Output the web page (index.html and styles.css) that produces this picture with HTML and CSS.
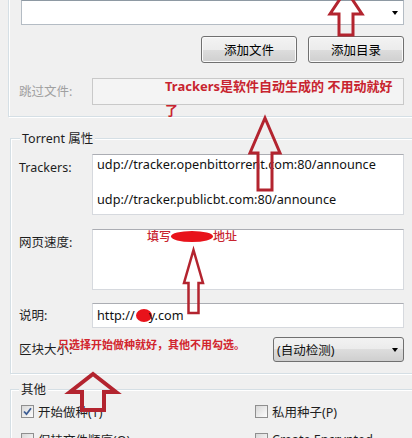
FILE: index.html
```html
<!DOCTYPE html>
<html lang="zh-CN">
<head>
<meta charset="utf-8">
<title>创建 Torrent</title>
<link rel="stylesheet" href="styles.css">
</head>
<body>
<div class="dlg">
  <div class="grp g1">
    <div class="top-combo"><span class="tri"></span></div>
    <div class="btnrow">
      <button class="btn">添加文件</button>
      <button class="btn">添加目录</button>
    </div>
    <div class="row">
      <span class="lbl dis">跳过文件:</span>
      <div class="field skip"></div>
    </div>
  </div>

  <div class="grp g2">
    <span class="legend">Torrent 属性</span>
    <div class="row top">
      <span class="lbl">Trackers:</span>
      <div class="field area"><div>udp://tracker.openbittorrent.com:80/announce</div><div>&nbsp;</div><div>udp://tracker.publicbt.com:80/announce</div></div>
    </div>
    <div class="row top r2">
      <span class="lbl">网页速度:</span>
      <div class="field area"></div>
    </div>
    <div class="row r3">
      <span class="lbl">说明:</span>
      <div class="field line">http://<span class="blob b2"></span>y.com</div>
    </div>
    <div class="row r4">
      <span class="lbl">区块大小:</span>
      <div class="sel"><span>(自动检测)</span><span class="tri"></span></div>
    </div>
  </div>

  <div class="grp g3">
    <span class="legend l3">其他</span>
    <div class="checks">
      <label class="chk"><span class="box"><svg width="11" height="11" viewBox="0 0 11 11"><path d="M2 5.5 L4.5 8.2 L9 2.2" fill="none" stroke="#3d5d94" stroke-width="1.8"/></svg></span>开始做种(T)</label>
      <label class="chk"><span class="box"></span>私用种子(P)</label>
      <label class="chk"><span class="box"></span>保持文件顺序(O)</label>
      <label class="chk"><span class="box"></span>Create Encrypted</label>
    </div>
  </div>

  <svg class="arrows" width="412" height="438" viewBox="0 0 412 438">
    <polygon points="346,-10 362,14 353,14 353,35 339,35 339,14 330,14"/>
    <polygon points="265,118 280,153 272,153 272,190 258,190 258,153 250,153"/>
    <polygon class="thin" points="193.5,250 203,283 198.5,283 198.5,313 188.5,313 188.5,283 184,283"/>
    <polygon class="thick" points="93,374 116,392 104,392 104,410 82,410 82,392 70,392"/>
  </svg>

  <div class="note n1">Trackers是软件自动生成的 不用动就好<br>了</div>
  <div class="note n2">填写<span class="blob b1"></span>地址</div>
  <div class="note n3">只选择开始做种就好，其他不用勾选。</div>
</div>
</body>
</html>
```

FILE: styles.css
```css
body {
  margin: 0;
  background: #f0f0f0;
  font-family: "Noto Sans", "Noto Sans CJK SC", sans-serif;
  font-size: 12.5px;
  color: #1e1e1e;
}

.dlg {
  position: relative;
  width: 412px;
  height: 438px;
  overflow: hidden;
}

.grp {
  position: relative;
  border: 1px solid #d5dfe5;
  border-right: none;
  box-shadow: inset 1px 1px 0 #fff, 1px 1px 0 #fff;
}

.g1 {
  margin-left: 8px;
  border-top: none;
  padding: 0 8px 11px 10px;
  box-shadow: inset 1px 0 0 #fff, 1px 1px 0 #fff;
}

.top-combo {
  margin-left: 2px;
  height: 25px;
  box-sizing: border-box;
  background: #fff;
  border: 1px solid #b4bcc4;
  border-top-color: #8e99a3;
  display: flex;
  align-items: center;
  justify-content: flex-end;
  padding-right: 5px;
}

.tri {
  width: 0;
  height: 0;
  border-left: 3.5px solid transparent;
  border-right: 3.5px solid transparent;
  border-top: 4px solid #000;
}

.btnrow {
  display: flex;
  justify-content: flex-end;
  gap: 11px;
  margin-top: 11px;
}

.btn {
  width: 96px;
  height: 27px;
  padding: 0;
  border: 1px solid #707070;
  border-radius: 3px;
  background: linear-gradient(#f3f3f3 0, #ececec 50%, #dddddd 50%, #cfcfcf 100%);
  box-shadow: inset 0 0 0 1px #fafafa;
  font: inherit;
  color: #000;
}

.row {
  display: grid;
  grid-template-columns: 73px 1fr;
  align-items: center;
}

.row.top {
  align-items: start;
}

.row.top .lbl {
  padding-top: 5px;
}

.g1 .row {
  margin-top: 15px;
}

.lbl {
  white-space: nowrap;
  line-height: 17px;
}

.dis {
  color: #a0a0a0;
}

.field {
  box-sizing: border-box;
  background: #fff;
  border: 1px solid #d6d9de;
  border-top-color: #abadb3;
  height: 25px;
}

.skip {
  height: 27px;
  background: #f4f4f4;
  border-color: #c9c9c9;
}

.g2 {
  margin: 21px 0 0 10px;
  padding: 15px 8px 11px 8px;
}

.legend {
  position: absolute;
  left: 9px;
  top: -9px;
  padding: 0 2px;
  line-height: 17px;
  background: #f0f0f0;
}

.area {
  height: 61px;
  padding: 1px 4px;
  line-height: 17.5px;
  font-size: 12.7px;
  color: #111;
}

.r2 { margin-top: 14px; }
.r3 { margin-top: 13px; }
.r4 { margin-top: 9px; }

.line {
  padding-left: 4px;
  line-height: 23px;
  font-size: 12.7px;
  color: #111;
}

.sel {
  justify-self: end;
  width: 131px;
  height: 25px;
  box-sizing: border-box;
  border: 1px solid #707070;
  border-radius: 3px;
  background: linear-gradient(#f2f2f2 0, #ebebeb 50%, #dddddd 50%, #cfcfcf 100%);
  display: flex;
  align-items: center;
  justify-content: space-between;
  padding: 0 5px 0 3px;
  color: #111;
}

.g3 {
  margin: 15px 0 0 10px;
  padding: 12px 8px 20px 10px;
}

.l3 {
  left: 8px;
}

.checks {
  display: grid;
  grid-template-columns: 234px 1fr;
  row-gap: 10px;
}

.chk {
  display: flex;
  align-items: center;
  gap: 4px;
  height: 18px;
  white-space: nowrap;
}

.box {
  flex: none;
  width: 13px;
  height: 13px;
  box-sizing: border-box;
  border: 1px solid #8f8f8f;
  background: linear-gradient(135deg, #d8d8d8, #fdfdfd);
  display: flex;
  align-items: center;
  justify-content: center;
}

.arrows {
  position: absolute;
  left: 0;
  top: 0;
  pointer-events: none;
}

.arrows polygon {
  fill: none;
  stroke: #b3242f;
  stroke-width: 3;
}

.arrows .thin { stroke-width: 2.5; }
.arrows .thick { stroke-width: 4; }

.note {
  position: absolute;
  color: #c8242f;
  font-weight: 700;
  white-space: nowrap;
}

.n1 {
  left: 165px;
  top: 74px;
  font-size: 13px;
  line-height: 24px;
}

.n2 {
  left: 147px;
  top: 230px;
  font-size: 12px;
  line-height: 14px;
  font-weight: 500;
}

.n3 {
  left: 58px;
  top: 338px;
  font-size: 11px;
  line-height: 14px;
  color: #d2252d;
}

.blob {
  display: inline-block;
  vertical-align: middle;
  background: #e8131b;
  border-radius: 50%;
}

.b1 {
  width: 42px;
  height: 11px;
  margin-top: -2px;
}

.b2 {
  width: 16px;
  height: 13px;
  margin: -2px -3px 0 1px;
}
```
